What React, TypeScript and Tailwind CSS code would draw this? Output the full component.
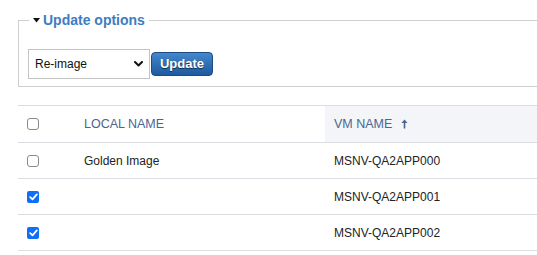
import React from 'react';

const ROWS = [
  { id: 'r0', local: 'Golden Image', vm: 'MSNV-QA2APP000', checked: false },
  { id: 'r1', local: '', vm: 'MSNV-QA2APP001', checked: true },
  { id: 'r2', local: '', vm: 'MSNV-QA2APP002', checked: true },
];

const Check: React.FC<{ checked?: boolean }> = ({ checked }) =>
  checked ? (
    <span className="flex h-[12px] w-[12px] items-center justify-center rounded-[2px] bg-[#0f6ff5]">
      <svg width="9" height="8" viewBox="0 0 9 8" fill="none">
        <path d="M1.2 4.2 L3.5 6.3 L7.8 1.4" stroke="white" strokeWidth="1.8" strokeLinecap="round" strokeLinejoin="round" />
      </svg>
    </span>
  ) : (
    <span className="block h-[12px] w-[12px] rounded-[3px] border border-[#8a8a8a] bg-white" />
  );

export default function App() {
  return (
    <div className="h-[255px] w-[537px] overflow-hidden bg-white font-['Liberation_Sans',Arial,sans-serif] text-[#222]">
      <div className="w-[580px] pl-[18px] pt-[11px]">
        <fieldset className="h-[76px] border border-[#cfcfcf] px-[9px] pt-[20px]">
          <legend className="ml-[1px] flex items-center gap-[3px] px-[4px] text-[14px] font-bold leading-[18px] text-[#3e7cc0]">
            <svg width="7" height="5" viewBox="0 0 7 5">
              <path d="M0 0 H7 L3.5 4.5 Z" fill="#111" />
            </svg>
            Update options
          </legend>
          <div className="flex items-center">
            <div className="relative flex h-[30px] w-[122px] items-center border border-[#c4c4c4] bg-white pl-[6px] text-[12px] text-[#111]">
              Re-image
              <svg className="absolute right-[6px] top-[11px]" width="9" height="6" viewBox="0 0 9 6" fill="none">
                <path d="M1 1 L4.5 4.5 L8 1" stroke="#111" strokeWidth="2" strokeLinecap="round" strokeLinejoin="round" />
              </svg>
            </div>
            <button className="ml-[1px] h-[24px] w-[62px] rounded-[4px] border border-[#1c4b85] bg-gradient-to-b from-[#4487cb] to-[#1e5a9f] text-[13px] font-bold text-white [text-shadow:0_1px_1px_rgba(0,0,0,0.6)]">
              Update
            </button>
          </div>
        </fieldset>

        <div className="mt-[18px] border-t border-[#dcdde3]">
          <div className="flex h-[37px] items-stretch border-b border-[#dcdde3] text-[12.5px] text-[#4b6590]">
            <div className="flex w-[66px] items-center pl-[9px]">
              <Check />
            </div>
            <div className="flex w-[241px] items-center">LOCAL NAME</div>
            <div className="flex flex-1 items-center gap-[9px] bg-[#f3f5f8] pl-[9px]">
              VM NAME
              <svg width="7" height="10" viewBox="0 0 7 10">
                <path d="M3.5 0.5 L6.5 4 H4.3 V9.5 H2.7 V4 H0.5 Z" fill="#4b6590" />
              </svg>
            </div>
          </div>
          {ROWS.map(r => (
            <div key={r.id} className="flex h-[36px] items-stretch border-b border-[#dcdde3] text-[12px] text-[#222]">
              <div className="flex w-[66px] items-center pl-[9px]">
                <Check checked={r.checked} />
              </div>
              <div className="flex w-[241px] items-center">{r.local}</div>
              <div className="flex flex-1 items-center pl-[9px]">{r.vm}</div>
            </div>
          ))}
        </div>
      </div>
    </div>
  );
}
